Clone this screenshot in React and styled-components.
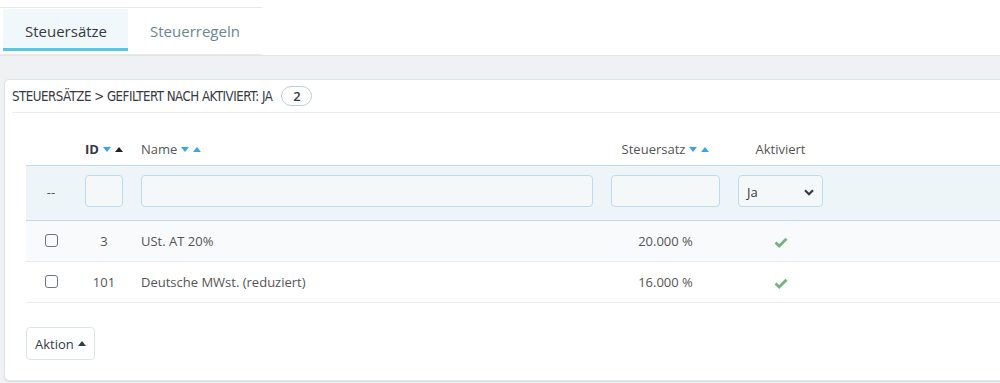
import React from "react";
import styled, { createGlobalStyle } from "styled-components";

const GlobalStyle = createGlobalStyle`
  body {
    margin: 0;
    background: #fff;
    font-family: "Open Sans", "Liberation Sans", sans-serif;
    overflow: hidden;
  }
`;

const Page = styled.div`
  width: 1000px;
  height: 383px;
  overflow: hidden;
  background: #eff1f2;
`;

const TopBar = styled.div`
  background: #fff;
  height: 56px;
  padding-top: 7px;
  box-sizing: border-box;
  border-bottom: 1px solid #e2e4e6;
`;

const Tabs = styled.div`
  width: 262px;
  height: 48px;
  border-top: 1px solid #e8e8e8;
  border-bottom: 1px solid #e8e8e8;
  display: flex;
  padding-left: 3px;
  padding-top: 1px;
  box-sizing: border-box;
`;

const Tab = styled.div`
  height: 42px;
  padding: 0 21px 0 22px;
  display: flex;
  align-items: center;
  padding-top: 4px;
  box-sizing: border-box;
  font-size: 15px;
  color: ${p => (p.active ? "#363a41" : "#6c868e")};
  background: ${p => (p.active ? "#f1f8fb" : "transparent")};
  border-bottom: 3px solid ${p => (p.active ? "#5bc4e0" : "transparent")};
`;

const Content = styled.div`
  padding: 23px 0 0 4px;
`;

const Panel = styled.div`
  width: 1100px;
  height: 302px;
  background: #fff;
  border: 1px solid #dbe6e9;
  border-radius: 5px;
  box-shadow: 0 1px 1px rgba(0, 0, 0, 0.08);
  box-sizing: border-box;
  padding: 0 0 0 7px;
`;

const PanelHeader = styled.div`
  height: 32px;
  display: flex;
  align-items: center;
  gap: 9px;
  border-bottom: 1px solid #eaedef;
  font-family: "DejaVu Sans Condensed", "Liberation Sans", sans-serif;
  font-size: 13.2px;
  letter-spacing: -0.5px;
  color: #363a41;
  text-transform: uppercase;
`;

const Badge = styled.span`
  display: inline-flex;
  align-items: center;
  justify-content: center;
  width: 31px;
  height: 20px;
  border: 1px solid #bbcdd2;
  border-radius: 10px;
  box-sizing: border-box;
  font-family: "Open Sans", sans-serif;
  letter-spacing: 0;
  font-size: 13px;
  font-weight: 600;
  color: #363a41;
`;

const Body = styled.div`
  padding: 19px 0 0 14px;
`;

const Table = styled.table`
  width: 1080px;
  border-collapse: collapse;
  font-size: 13px;
  color: #555;
`;

const Th = styled.th`
  height: 33px;
  padding: 0 9px;
  font-weight: ${p => (p.bold ? 700 : 400)};
  color: ${p => (p.bold ? "#363a41" : "#555")};
  text-align: ${p => p.align || "center"};
  white-space: nowrap;
`;

const FilterRow = styled.tr`
  background: #eef5f9;
  border-top: 1px solid #bbdcef;
  border-bottom: 1px solid #bbdcef;
`;

const FilterCell = styled.td`
  padding: 9px 9px 13px;
  text-align: center;
  vertical-align: top;
`;

const Dashes = styled.span`
  display: inline-block;
  margin-top: 8px;
  color: #555;
`;

const Input = styled.div`
  height: 32px;
  width: 100%;
  box-sizing: border-box;
  border: 1px solid #bbdcef;
  border-radius: 4px;
  background: #f5f8f9;
`;

const Select = styled.div`
  height: 32px;
  box-sizing: border-box;
  border: 1px solid #bbdcef;
  border-radius: 4px;
  background: #f5f8f9;
  display: flex;
  align-items: center;
  justify-content: space-between;
  padding: 2px 8px 0 8px;
  font-size: 13px;
  color: #363a41;
`;

const Row = styled.tr`
  background: ${p => (p.striped ? "#f8fafb" : "#fff")};
  border-bottom: 1px solid #eaedef;
`;

const Td = styled.td`
  height: 40px;
  padding: 0 9px;
  text-align: ${p => p.align || "center"};
  white-space: nowrap;
`;

const Checkbox = styled.span`
  display: inline-block;
  width: 13px;
  height: 13px;
  border: 1px solid #6c757d;
  border-radius: 3px;
  box-sizing: border-box;
  vertical-align: middle;
  margin-top: -4px;
`;

const Footer = styled.div`
  padding-top: 24px;
`;

const Button = styled.div`
  display: inline-flex;
  align-items: center;
  gap: 4px;
  height: 33px;
  padding: 0 8px 0 8px;
  box-sizing: border-box;
  border: 1px solid #dbe6e9;
  border-radius: 4px;
  font-size: 13px;
  color: #363a41;
  background: #fff;
`;

const SortIcons = styled.span`
  display: inline-flex;
  gap: 4px;
  margin-left: 4px;
  vertical-align: middle;
  position: relative;
  top: -1px;
`;

const Tri = ({ up, color }) => (
  <svg width="8" height="5" viewBox="0 0 8 5">
    <polygon points={up ? "0,5 8,5 4,0" : "0,0 8,0 4,5"} fill={color} />
  </svg>
);

const Sort = ({ active }) => (
  <SortIcons>
    <Tri color="#3aa7e0" />
    <Tri up color={active ? "#222" : "#3aa7e0"} />
  </SortIcons>
);

const Check = () => (
  <svg width="14" height="11" viewBox="0 0 14 11" style={{ verticalAlign: "middle" }}>
    <path d="M1.5 5.5 L5.2 9 L12.5 1.8" fill="none" stroke="#70b580" strokeWidth="2.8" />
  </svg>
);

const Chevron = () => (
  <svg width="10" height="7" viewBox="0 0 10 7">
    <path d="M1 1.2 L5 5.2 L9 1.2" fill="none" stroke="#363a41" strokeWidth="2.2" />
  </svg>
);

const rows = [
  { id: 3, name: "USt. AT 20%", rate: "20.000 %" },
  { id: 101, name: "Deutsche MWst. (reduziert)", rate: "16.000 %" },
];

export default function App() {
  return (
    <Page>
      <GlobalStyle />
      <TopBar>
        <Tabs>
          <Tab active>Steuersätze</Tab>
          <Tab>Steuerregeln</Tab>
        </Tabs>
      </TopBar>
      <Content>
        <Panel>
          <PanelHeader>
            Steuersätze &gt; Gefiltert nach Aktiviert: Ja
            <Badge>2</Badge>
          </PanelHeader>
          <Body>
            <Table>
              <colgroup>
                <col style={{ width: 50 }} />
                <col style={{ width: 56 }} />
                <col style={{ width: 470 }} />
                <col style={{ width: 127 }} />
                <col style={{ width: 103 }} />
                <col />
              </colgroup>
              <thead>
                <tr>
                  <Th />
                  <Th bold align="left">ID<Sort active /></Th>
                  <Th align="left">Name<Sort /></Th>
                  <Th>Steuersatz<Sort /></Th>
                  <Th>Aktiviert</Th>
                  <Th />
                </tr>
                <FilterRow>
                  <FilterCell><Dashes>--</Dashes></FilterCell>
                  <FilterCell><Input /></FilterCell>
                  <FilterCell><Input /></FilterCell>
                  <FilterCell><Input /></FilterCell>
                  <FilterCell>
                    <Select>Ja<Chevron /></Select>
                  </FilterCell>
                  <FilterCell />
                </FilterRow>
              </thead>
              <tbody>
                {rows.map((r, i) => (
                  <Row key={r.id} striped={i % 2 === 0}>
                    <Td><Checkbox /></Td>
                    <Td>{r.id}</Td>
                    <Td align="left">{r.name}</Td>
                    <Td>{r.rate}</Td>
                    <Td><Check /></Td>
                    <Td />
                  </Row>
                ))}
              </tbody>
            </Table>
            <Footer>
              <Button>
                Aktion
                <Tri up color="#363a41" />
              </Button>
            </Footer>
          </Body>
        </Panel>
      </Content>
    </Page>
  );
}
